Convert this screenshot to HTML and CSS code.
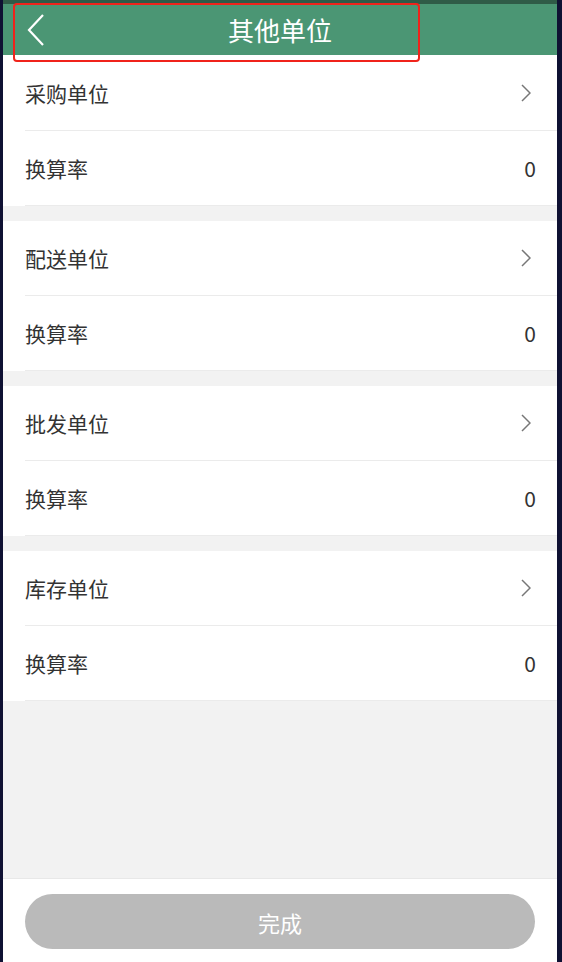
FILE: index.html
```html
<!DOCTYPE html>
<html>
<head>
    <meta charset="utf-8">
    <title>其他单位</title>
    <link rel="stylesheet" href="styles.css">
</head>
<body>
    <div class="screen">
        <header class="topbar">
            <button class="back">
                <svg width="18" height="32" viewBox="0 0 18 32"><path d="M16 1 L2 16 L16 31" fill="none" stroke="#fff" stroke-width="2.2"/></svg>
            </button>
            <h1>其他单位</h1>
            <span></span>
        </header>
        <div class="highlight"></div>

        <main class="content">
            <section class="group">
                <div class="row">
                    <span class="label">采购单位</span>
                    <svg class="chevron" width="10" height="18" viewBox="0 0 10 18"><path d="M1 1 L9 9 L1 17" fill="none" stroke="#777" stroke-width="1.5"/></svg>
                </div>
                <div class="row">
                    <span class="label">换算率</span>
                    <span class="value">0</span>
                </div>
            </section>

            <section class="group">
                <div class="row">
                    <span class="label">配送单位</span>
                    <svg class="chevron" width="10" height="18" viewBox="0 0 10 18"><path d="M1 1 L9 9 L1 17" fill="none" stroke="#777" stroke-width="1.5"/></svg>
                </div>
                <div class="row">
                    <span class="label">换算率</span>
                    <span class="value">0</span>
                </div>
            </section>

            <section class="group">
                <div class="row">
                    <span class="label">批发单位</span>
                    <svg class="chevron" width="10" height="18" viewBox="0 0 10 18"><path d="M1 1 L9 9 L1 17" fill="none" stroke="#777" stroke-width="1.5"/></svg>
                </div>
                <div class="row">
                    <span class="label">换算率</span>
                    <span class="value">0</span>
                </div>
            </section>

            <section class="group">
                <div class="row">
                    <span class="label">库存单位</span>
                    <svg class="chevron" width="10" height="18" viewBox="0 0 10 18"><path d="M1 1 L9 9 L1 17" fill="none" stroke="#777" stroke-width="1.5"/></svg>
                </div>
                <div class="row">
                    <span class="label">换算率</span>
                    <span class="value">0</span>
                </div>
            </section>
        </main>

        <footer class="footer">
            <button class="done">完成</button>
        </footer>
    </div>
</body>
</html>
```
FILE: styles.css
```css
html, body {
    margin: 0;
    height: 100%;
}

body {
    background-color: #0f1133;
    font-family: "Noto Sans CJK SC", sans-serif;
}

.screen {
    position: relative;
    height: 962px;
    margin: 0 5px 0 3px;
    display: flex;
    flex-direction: column;
    background-color: #f2f2f2;
}

.topbar {
    height: 51px;
    border-top: 4px solid #2f5b47;
    background-color: #4b9674;
    display: grid;
    grid-template-columns: 1fr auto 1fr;
    align-items: center;
}

.back {
    justify-self: start;
    margin-left: 24px;
    padding: 0;
    border: none;
    background: none;
    display: flex;
    cursor: pointer;
}

.topbar h1 {
    margin: 0;
    color: #fff;
    font-size: 26px;
    font-weight: normal;
    line-height: 1;
}

/* red annotation box drawn over the header */
.highlight {
    position: absolute;
    left: 10px;
    top: 3px;
    width: 407px;
    height: 59px;
    box-sizing: border-box;
    border: 2.5px solid #f0231b;
    border-radius: 4px;
}

.content {
    flex: 1;
}

.group {
    background-color: #fff;
    margin-bottom: 15px;
}

.group:first-child {
    padding-top: 1px;
}

.row {
    height: 74px;
    margin-left: 22px;
    padding-right: 21px;
    border-bottom: 1px solid #ebebeb;
    display: flex;
    align-items: center;
    justify-content: space-between;
}

.label {
    font-size: 21px;
    color: #333;
}

.value {
    font-size: 21px;
    color: #333;
}

.chevron {
    margin-right: 5px;
}

.footer {
    height: 84px;
    border-top: 1px solid #e8e8e8;
    background-color: #fff;
    padding: 15px 22px 0;
    box-sizing: border-box;
}

.done {
    width: 100%;
    height: 55px;
    border: none;
    border-radius: 28px;
    background-color: #bababa;
    color: #fff;
    font-family: inherit;
    font-size: 22px;
}
```
